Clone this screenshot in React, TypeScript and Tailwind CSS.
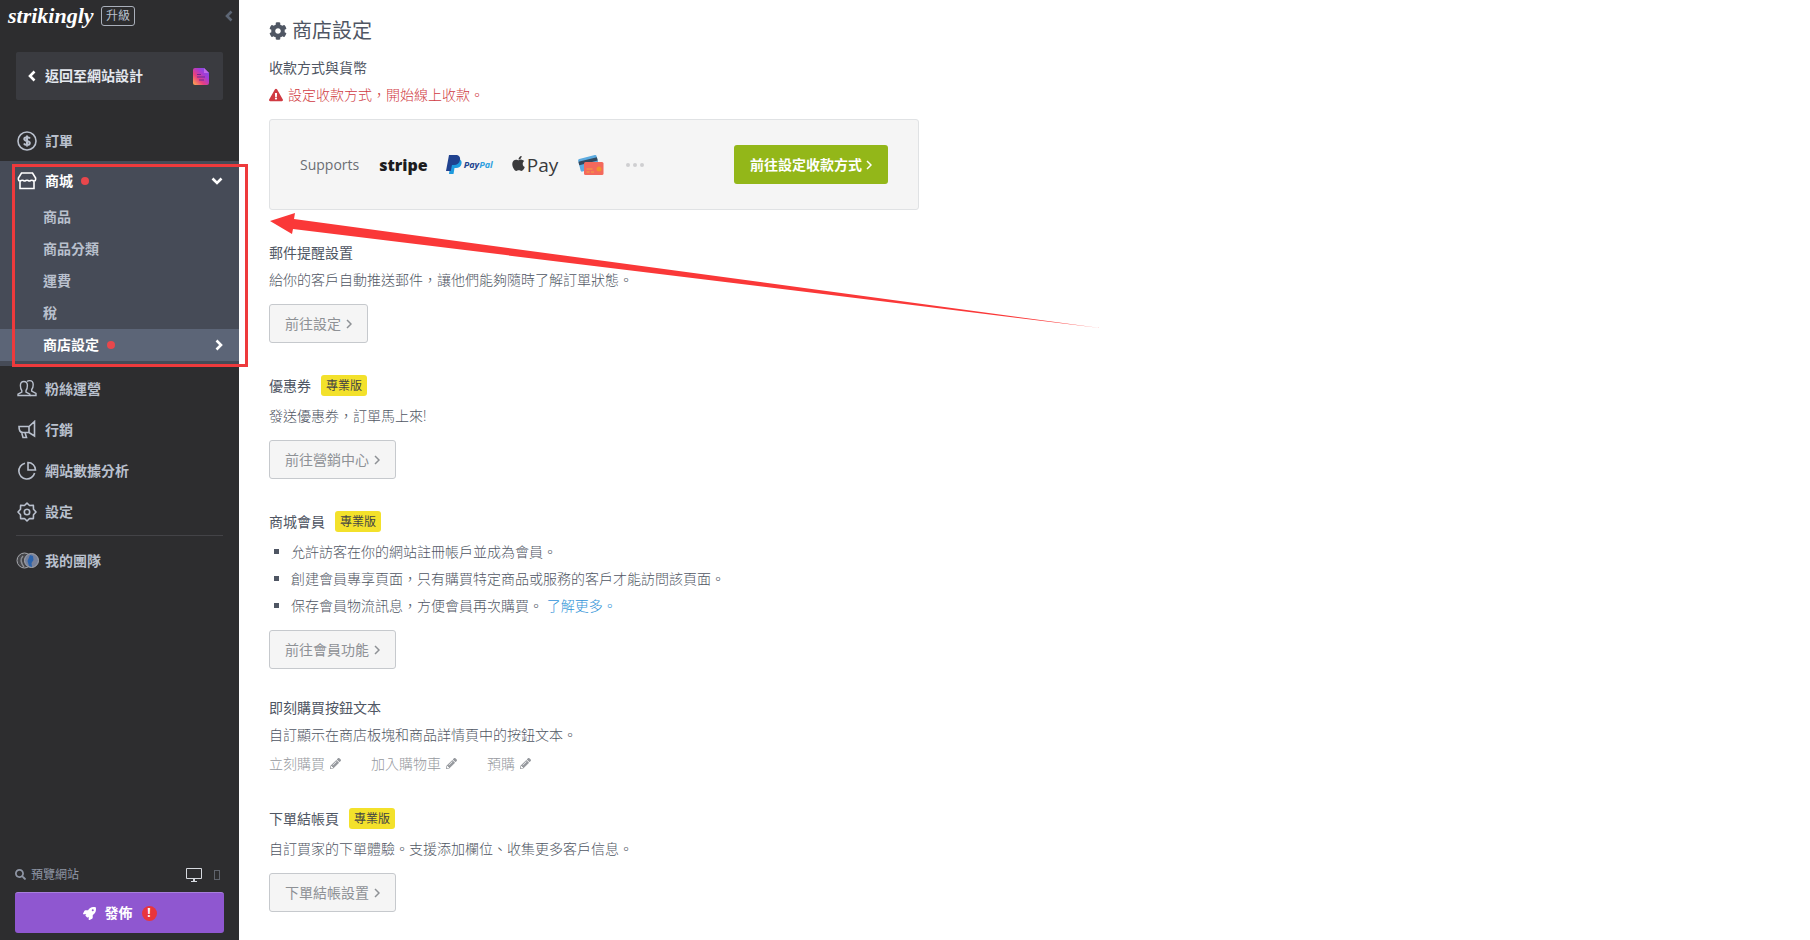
import React from 'react';
import clsx from 'clsx';
import { FaApple, FaCog, FaExclamationTriangle, FaPencilAlt, FaRocket, FaSearch } from 'react-icons/fa';

const line = {
  viewBox: '0 0 20 20',
  fill: 'none',
  stroke: 'currentColor',
  strokeWidth: 1.6,
  className: 'h-5 w-5 shrink-0',
} as const;

const DollarIcon = () => (
  <svg {...line}>
    <circle cx="10" cy="10" r="9" />
    <path
      strokeWidth="2"
      d="M13 7.500C12.400 6.500 11.300 6.200 10 6.200c-1.700 0-2.700.7-2.700 1.800s1 1.600 2.700 2 2.800.9 2.800 2-1.100 1.900-2.800 1.900c-1.400 0-2.500-.4-3.100-1.400M10 4.500v11"
    />
  </svg>
);

const StoreIcon = () => (
  <svg {...line}>
    <path d="M4.500 2h11L18.600 7v1.500c0 1-.6 1.500-1.500 1.500s-1.700-.8-2.400-.8-1.400.8-2.300.8S10.700 9.200 10 9.200s-1.500.8-2.400.8-1.600-.8-2.300-.8-1.500.8-2.400.8-1.500-.5-1.500-1.500V7zM3 10v7.500h14V10" />
  </svg>
);

const PeopleIcon = () => (
  <svg {...line} strokeWidth={1.4}>
    <path d="M1 16.500v-1.300l3.800-2v-1.700C3.700 10.200 3.400 8.500 3.400 6.500 3.400 4 4.700 2.500 6.900 2.500s3.500 1.500 3.500 4c0 2-.3 3.700-1.400 5v1.700l3.800 2v1.300z" />
    <path d="M10 2.600c.6-.6 1.500-1 2.600-1 2.300 0 3.600 1.500 3.600 4.100 0 2-.5 3.600-1.500 4.800v1.700l4.300 2.300v2h-6" />
  </svg>
);

const MegaphoneIcon = () => (
  <svg {...line}>
    <path d="M17.500 1.500v14.500L12 12.500H6C3 12.500 2 10.500 2 6.500h10zM12 6.500v6M4.500 12l1.500 5.500h3.500L8 12.500" />
  </svg>
);

const PieIcon = () => (
  <svg {...line}>
    <path d="M8 2.200A8 8 0 1 0 17.600 12" />
    <path d="M11 1.500v7.500h7.500A7.500 7.500 0 0 0 11 1.500z" />
  </svg>
);

const GearIcon = () => (
  <svg {...line}>
    <path
      strokeLinejoin="round"
      d="M10 1l2.500 2.500 3.900-.1.1 3.900L19 10l-2.500 2.700-.1 3.900-3.900-.1L10 19l-2.500-2.500-3.900.1-.1-3.900L1 10l2.500-2.700.1-3.900 3.900.1z"
    />
    <circle cx="10" cy="10" r="2.700" />
  </svg>
);

const TeamIcon = () => (
  <svg viewBox="0 0 24 18" className="h-[18px] w-6 shrink-0">
    <circle cx="8.500" cy="8.500" r="7.500" fill="#45464a" stroke="#a6a8ad" />
    <path d="M7 4c-3 3-2 7 1 11" stroke="#8c8e93" strokeWidth="1.500" fill="none" />
    <circle cx="15.500" cy="8.500" r="7" fill="#77819a" stroke="#a6a8ad" />
    <path d="M14 3l3 1 .5 4-2 3 .5 4-3-1-1.500-5z" fill="#2a63ad" />
  </svg>
);

const DocIcon = () => (
  <svg viewBox="0 0 16 17" className="h-[17px] w-4">
    <defs>
      <linearGradient id="doc" x1="0" y1="1" x2="1" y2="0">
        <stop offset="0" stopColor="#ffb04a" />
        <stop offset="0.350" stopColor="#e8407f" />
        <stop offset="0.650" stopColor="#a43bd6" />
        <stop offset="1" stopColor="#6a5be8" />
      </linearGradient>
    </defs>
    <path d="M2 0h9l5 5v10a2 2 0 0 1-2 2H2a2 2 0 0 1-2-2V2a2 2 0 0 1 2-2z" fill="url(#doc)" />
    <path d="M11 0v5h5z" fill="#c268ea" />
    <path d="M4 6.500h4M4 9h8M6 12h5" stroke="#6a2a94" strokeWidth="1.200" />
  </svg>
);

const PaypalMark = () => (
  <svg viewBox="0 0 16 19" className="h-[19px] w-4">
    <path d="M5 4h8c2 .8 3 2.300 2.500 4.700-.6 3-2.700 4.300-5.500 4.300H8.500L7.500 19H3z" fill="#1f9bde" />
    <path d="M3 0h6.500C13 0 14.500 2 14 5c-.6 3.500-3 5-6 5H6l-1.200 6H0z" fill="#20428f" />
  </svg>
);

const CardsIcon = () => (
  <svg viewBox="0 0 26 22" className="h-[22px] w-[26px]">
    <g transform="rotate(-14 10 9)">
      <rect x="1" y="3" width="19" height="13" rx="1.500" fill="#5cabe0" />
      <rect x="1" y="5.500" width="19" height="3.500" fill="#34495e" />
    </g>
    <rect x="6" y="8" width="19.500" height="13" rx="1.500" fill="#f4695c" />
    <path d="M8.500 18h3M13 18h3M8.500 15h6" stroke="#f3a43e" />
    <circle cx="21" cy="15" r="2.500" fill="#f0932f" />
  </svg>
);

const Angle = () => (
  <svg viewBox="0 0 6 10" fill="none" stroke="currentColor" strokeWidth="1.500" className="h-[10px] w-[6px]">
    <path d="M1 1l4 4-4 4" />
  </svg>
);

const chevrons = {
  left: 'M8.500 1.500L4 6l4.500 4.500',
  right: 'M3.500 1.500L8 6l-4.500 4.500',
  down: 'M1.500 3.500L6 8l4.500-4.500',
};

function Chevron({ to, className }: { to: keyof typeof chevrons; className?: string }) {
  return (
    <svg
      viewBox="0 0 12 12"
      fill="none"
      stroke="currentColor"
      strokeWidth="2.600"
      className={clsx('h-3 w-3 shrink-0', className)}
    >
      <path d={chevrons[to]} />
    </svg>
  );
}

const Dot = () => <span className="ml-2 h-2 w-2 rounded-full bg-[#e8474c]" />;

const Badge = () => (
  <span className="ml-[10px] flex h-[21px] items-center rounded-[3px] bg-[#f3e12b] px-[5px] text-xs text-[#444]">
    專業版
  </span>
);

function NavItem({ icon, label }: { icon: React.ReactNode; label: string }) {
  return (
    <a href="#" className="flex h-[41px] items-center pl-[17px]">
      {icon}
      <span className="ml-2">{label}</span>
    </a>
  );
}

function GoButton({ children }: { children: React.ReactNode }) {
  return (
    <button className="mt-[11px] flex h-[39px] items-center gap-[5px] rounded-[3px] border border-[#c6c9cd] bg-[#f5f5f5] px-[15px] text-[#8e9195]">
      {children}
      <Angle />
    </button>
  );
}

function Title({ children, pro }: { children: React.ReactNode; pro?: boolean }) {
  return (
    <h2 className={clsx('flex h-[27px] items-center', pro && 'mb-[3px]')}>
      {children}
      {pro && <Badge />}
    </h2>
  );
}

const subItems = ['商品', '商品分類', '運費', '稅'];
const buttonTexts = ['立刻購買', '加入購物車', '預購'];

function Sidebar() {
  return (
    <aside className="flex w-[239px] shrink-0 flex-col bg-[#2d2d2f] text-sm font-bold text-[#b9c0cd]">
      <div className="flex h-8 items-center pl-2">
        <span className="w-[93px] font-['Liberation_Serif',serif] text-[22px] leading-8 font-bold text-white italic">
          strikingly
        </span>
        <button className="flex h-5 items-center rounded-[3px] border border-[#a9afba] px-1 text-xs font-normal">
          升級
        </button>
        <Chevron to="left" className="mr-1 ml-auto text-[#5d6675]" />
      </div>
      <a href="#" className="mx-4 mt-5 flex h-12 items-center rounded-[2px] bg-[#3a3b40] px-[10px] text-[#e4e8ef]">
        <Chevron to="left" className="text-white" />
        <span className="ml-[7px]">返回至網站設計</span>
        <span className="mr-1 ml-auto">
          <DocIcon />
        </span>
      </a>

      <nav className="mt-5">
        <NavItem icon={<DollarIcon />} label="訂單" />
        <div className="mb-[2px] bg-[#464b57] pb-[5px]">
          <a href="#" className="flex h-10 items-center pr-4 pl-[17px] text-white">
            <StoreIcon />
            <span className="ml-2">商城</span>
            <Dot />
            <Chevron to="down" className="ml-auto" />
          </a>
          {subItems.map((item) => (
            <a key={item} href="#" className="flex h-8 items-center pl-[43px]">
              {item}
            </a>
          ))}
          <a href="#" className="flex h-8 items-center bg-[#5c6577] pr-[14px] pl-[43px] text-white">
            商店設定
            <Dot />
            <Chevron to="right" className="ml-auto" />
          </a>
        </div>
        <NavItem icon={<PeopleIcon />} label="粉絲運營" />
        <NavItem icon={<MegaphoneIcon />} label="行銷" />
        <NavItem icon={<PieIcon />} label="網站數據分析" />
        <NavItem icon={<GearIcon />} label="設定" />
        <hr className="mx-4 mt-[3px] mb-1 border-[#434347]" />
        <a href="#" className="flex h-[41px] items-center pl-4">
          <TeamIcon />
          <span className="ml-[5px]">我的團隊</span>
        </a>
      </nav>

      <div className="mt-auto px-[15px] pb-[7px]">
        <div className="flex h-[35px] items-center text-xs font-normal text-[#8f96a5]">
          <FaSearch className="h-[11px] w-[11px]" />
          <span className="ml-[5px]">預覽網站</span>
          <svg viewBox="0 0 16 14" className="ml-auto h-[14px] w-4 text-[#d6d9df]">
            <path d="M.5.500h15v10H.5z" fill="none" stroke="currentColor" />
            <path d="M7 11h2v2h2v1H5v-1h2z" fill="currentColor" />
          </svg>
          <span className="mr-1 ml-3 h-[10px] w-[6px] border border-[#5f636c]" />
        </div>
        <button className="flex h-[41px] w-full items-center justify-center rounded-[3px] border-t border-[#a77fdc] bg-[#8f57d0] text-white">
          <FaRocket className="h-[13px] w-[13px]" />
          <span className="ml-[9px]">發佈</span>
          <span className="ml-[9px] flex h-[15px] w-[15px] items-center justify-center rounded-full bg-[#e9353c] text-xs">
            !
          </span>
        </button>
      </div>
    </aside>
  );
}

function Payments() {
  return (
    <div className="mt-[11px] flex h-[91px] w-full max-w-[650px] items-center rounded-[3px] border border-[#e0e2e4] bg-[#f5f5f5] px-[30px]">
      <span className="text-[#6b6e73]">Supports</span>
      <span className="ml-5 font-['Open_Sans',sans-serif] text-base leading-5 font-extrabold text-[#1c1c1e]">
        stripe
      </span>
      <span className="ml-[18px] flex items-center gap-[2px]">
        <PaypalMark />
        <span className="font-['Open_Sans',sans-serif] text-[9px] leading-3 font-bold text-[#20428f] italic">
          Pay<span className="text-[#2f9fdf]">Pal</span>
        </span>
      </span>
      <span className="ml-[17px] flex items-center text-[#3a3a3c]">
        <FaApple className="mb-[2px] h-[17px] w-[17px]" />
        <span className="font-['Open_Sans',sans-serif] text-[19px] leading-6">Pay</span>
      </span>
      <span className="ml-5">
        <CardsIcon />
      </span>
      <span className="ml-[22px] flex gap-[3px]">
        <i className="h-1 w-1 rounded-full bg-[#cfcfd1]" />
        <i className="h-1 w-1 rounded-full bg-[#cfcfd1]" />
        <i className="h-1 w-1 rounded-full bg-[#cfcfd1]" />
      </span>
      <button className="ml-auto flex h-[39px] items-center gap-1 rounded-[3px] bg-[#93b719] px-4 font-bold text-white">
        前往設定收款方式
        <Angle />
      </button>
    </div>
  );
}

export default function App() {
  return (
    <div className="relative flex min-h-screen bg-white font-['Open_Sans','Noto_Sans_CJK_TC',sans-serif] text-[#4f5663]">
      <Sidebar />
      <main className="min-w-0 flex-1 px-[30px] pt-[17px] pb-6 text-sm leading-[27px]">
        <h1 className="mb-[10px] flex h-[27px] items-center gap-[5px] text-xl">
          <FaCog className="h-[18px] w-[18px]" />
          商店設定
        </h1>

        <section>
          <Title>收款方式與貨幣</Title>
          <p className="flex items-center gap-[5px] font-light text-[#d03a42]">
            <FaExclamationTriangle className="h-[14px] w-[14px]" />
            設定收款方式，開始線上收款。
          </p>
          <Payments />
        </section>

        <section className="mt-[29px]">
          <Title>郵件提醒設置</Title>
          <p className="font-light">給你的客戶自動推送郵件，讓他們能夠隨時了解訂單狀態。</p>
          <GoButton>前往設定</GoButton>
        </section>

        <section className="mt-[29px]">
          <Title pro>優惠券</Title>
          <p className="font-light">發送優惠券，訂單馬上來!</p>
          <GoButton>前往營銷中心</GoButton>
        </section>

        <section className="mt-[29px]">
          <Title pro>商城會員</Title>
          <ul className="list-[square] pl-[22px] font-light">
            <li>允許訪客在你的網站註冊帳戶並成為會員。</li>
            <li>創建會員專享頁面，只有購買特定商品或服務的客戶才能訪問該頁面。</li>
            <li>
              保存會員物流訊息，方便會員再次購買。{' '}
              <a href="#" className="text-[#2f93d8]">
                了解更多。
              </a>
            </li>
          </ul>
          <GoButton>前往會員功能</GoButton>
        </section>

        <section className="mt-[25px]">
          <Title>即刻購買按鈕文本</Title>
          <p className="font-light">自訂顯示在商店板塊和商品詳情頁中的按鈕文本。</p>
          <div className="mt-[2px] flex gap-[30px] font-light text-[#96999e]">
            {buttonTexts.map((text) => (
              <button key={text} className="flex items-center gap-[5px]">
                {text}
                <FaPencilAlt className="h-[11px] w-[11px]" />
              </button>
            ))}
          </div>
        </section>

        <section className="mt-7">
          <Title pro>下單結帳頁</Title>
          <p className="font-light">自訂買家的下單體驗。支援添加欄位、收集更多客戶信息。</p>
          <GoButton>下單結帳設置</GoButton>
        </section>
      </main>

      {/* annotation marks over the page */}
      <div className="pointer-events-none absolute top-[164px] left-3 h-[203px] w-[236px] border-[3px] border-[#ee3a3c]" />
      <svg
        viewBox="0 0 830 116"
        className="pointer-events-none absolute top-[213px] left-[270px] h-[116px] w-[830px]"
        fill="#fa3838"
      >
        <path d="M0 8L25 0L24 6L830 115L23 16L22 21z" />
      </svg>
    </div>
  );
}
